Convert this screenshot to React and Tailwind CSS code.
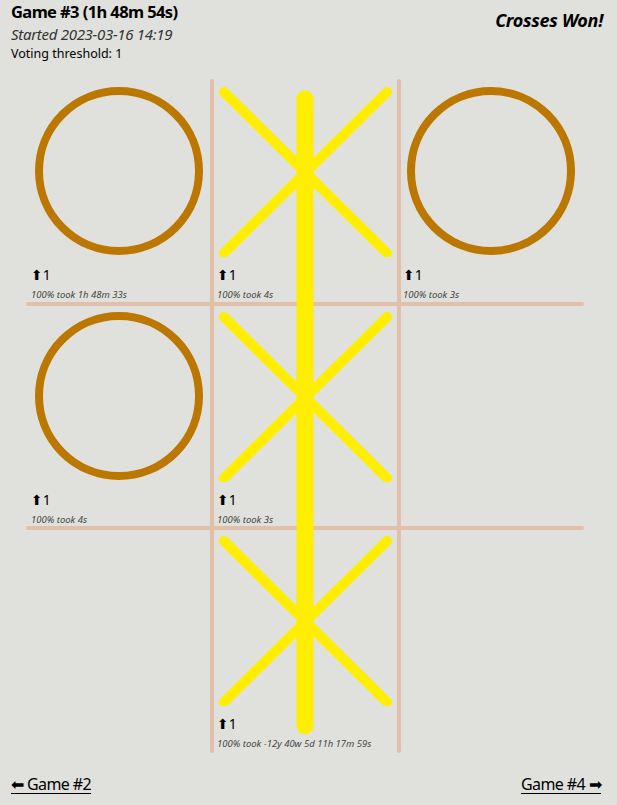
const CELLS = [
  { mark: 'O', took: '1h 48m 33s' },
  { mark: 'X', took: '4s' },
  { mark: 'O', took: '3s' },
  { mark: 'O', took: '4s' },
  { mark: 'X', took: '3s' },
  null,
  null,
  { mark: 'X', took: '-12y 40w 5d 11h 17m 59s' },
  null,
]

function Nought() {
  return (
    <svg width="186" height="178" viewBox="0 0 186 178" className="block">
      <circle cx="93" cy="92" r="80" fill="none" stroke="#bb7700" strokeWidth="8" />
    </svg>
  )
}

function Cross() {
  return (
    <svg width="186" height="178" viewBox="0 0 186 178" className="block">
      <g stroke="#ffee00" strokeWidth="10" strokeLinecap="round">
        <line x1="12" y1="13" x2="175" y2="174" />
        <line x1="175" y1="13" x2="12" y2="174" />
      </g>
    </svg>
  )
}

function Cell({ cell }) {
  if (!cell) return <div />
  return (
    <div className="flex flex-col">
      {cell.mark === 'O' ? <Nought /> : <Cross />}
      <div className="px-[5px] mt-[9px] text-[14px] leading-[18px] text-black">
        <span className="font-['DejaVu_Sans',sans-serif] text-[14px]">⬆</span>1
      </div>
      <div className="px-[5px] mt-[4px] text-[9.5px] leading-[14px] italic text-[#444]">
        100% took {cell.took}
      </div>
    </div>
  )
}

export default function App() {
  return (
    <div className="min-h-[805px] w-full bg-[#e0e1dc] text-black font-['Noto_Sans',sans-serif] relative">
      {/* Header */}
      <div className="flex justify-between px-[11px] pr-[14px]">
        <div>
          <h1 className="text-[16.5px] font-bold leading-[24px] tracking-[-0.6px]">Game #3 (1h 48m 54s)</h1>
          <div className="text-[15px] italic leading-[20px] text-[#333] tracking-[-0.3px]">Started 2023-03-16 14:19</div>
          <div className="text-[12.5px] leading-[18px] mt-[1px]">Voting threshold: 1</div>
        </div>
        <div className="text-[18px] font-bold italic leading-[42px] tracking-[-0.3px] self-start -mt-[1px]">Crosses Won!</div>
      </div>

      {/* Board */}
      <div className="relative ml-[26px] mt-[16px] w-[558px] h-[674px] grid grid-cols-3 grid-rows-[225px_224px_225px]">
        {CELLS.map((c, i) => (
          <Cell key={i} cell={c} />
        ))}

        {/* grid lines */}
        <div className="absolute top-0 bottom-0 left-[184px] w-[4px] rounded-full bg-[#e2bfa9]" />
        <div className="absolute top-0 bottom-0 left-[371px] w-[4px] rounded-full bg-[#e2bfa9]" />
        <div className="absolute left-0 right-0 top-[223px] h-[4px] rounded-full bg-[#e2bfa9]" />
        <div className="absolute left-0 right-0 top-[447px] h-[4px] rounded-full bg-[#e2bfa9]" />

        {/* winning line */}
        <svg className="absolute left-0 top-0" width="558" height="674" viewBox="0 0 558 674">
          <line x1="279" y1="20" x2="279" y2="647" stroke="#ffee00" strokeWidth="17" strokeLinecap="round" />
        </svg>
      </div>

      {/* Footer nav */}
      <div className="flex justify-between px-[11px] pr-[16px] mt-[20px] text-[16px] leading-[22px] tracking-[-0.6px]">
        <a href="#" className="underline underline-offset-[3px]">⬅ Game #2</a>
        <a href="#" className="underline underline-offset-[3px]">Game #4 ➡</a>
      </div>
    </div>
  )
}
